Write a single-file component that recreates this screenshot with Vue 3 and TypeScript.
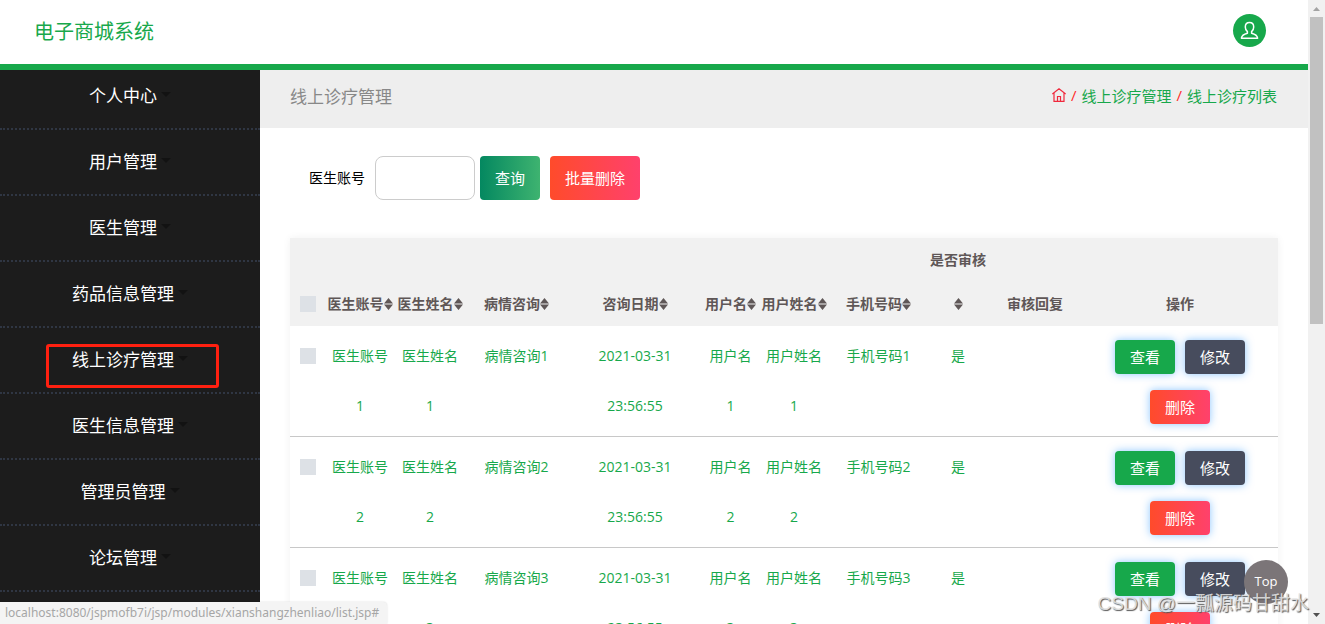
<script setup lang="ts">
import { ref } from 'vue'

interface Column {
  key: string
  label: string
  width: number
  sortable: boolean
  stacked?: boolean
}

interface Consultation {
  id: number
  account: string
  doctor: string
  question: string
  date: string
  user: string
  userName: string
  phone: string
  approved: string
  reply: string
}

const menu: string[] = [
  '个人中心',
  '用户管理',
  '医生管理',
  '药品信息管理',
  '线上诊疗管理',
  '医生信息管理',
  '管理员管理',
  '论坛管理',
]
const current = '线上诊疗管理'

const columns: Column[] = [
  { key: 'account', label: '医生账号', width: 70, sortable: true },
  { key: 'doctor', label: '医生姓名', width: 70, sortable: true },
  { key: 'question', label: '病情咨询', width: 103, sortable: true },
  { key: 'date', label: '咨询日期', width: 134, sortable: true },
  { key: 'user', label: '用户名', width: 57, sortable: true },
  { key: 'userName', label: '用户姓名', width: 70, sortable: true },
  { key: 'phone', label: '手机号码', width: 99, sortable: true },
  { key: 'approved', label: '是否审核', width: 60, sortable: true, stacked: true },
  { key: 'reply', label: '审核回复', width: 94, sortable: false },
]

const rows: Consultation[] = [1, 2, 3].map((n) => ({
  id: n,
  account: `医生账号${n}`,
  doctor: `医生姓名${n}`,
  question: `病情咨询${n}`,
  date: '2021-03-31 23:56:55',
  user: `用户名${n}`,
  userName: `用户姓名${n}`,
  phone: `手机号码${n}`,
  approved: '是',
  reply: '',
}))

const account = ref('')
const selected = ref<number[]>([])

function toggleAll(event: Event): void {
  selected.value = (event.target as HTMLInputElement).checked ? rows.map((r) => r.id) : []
}

function cell(row: Consultation, key: string): string {
  return String(row[key as keyof Consultation])
}
</script>

<template>
  <div class="window">
    <div class="page">
      <header class="topbar">
        <h1 class="brand">电子商城系统</h1>
        <button class="avatar" type="button" aria-label="用户">
          <svg viewBox="0 0 33 33" width="33" height="33" fill="none" stroke="#fff" stroke-width="1.5" stroke-linejoin="round">
            <path d="M16.5 8.500c-2.700 0-4.200 1.900-4.200 4.500 0 2.200.9 3.700 2.100 4.700v1.600c-3.300.8-5.600 2.200-6 4.900h16.200c-.4-2.700-2.700-4.100-6-4.900v-1.600c1.200-1 2.100-2.500 2.100-4.700 0-2.600-1.500-4.500-4.200-4.500z" />
          </svg>
        </button>
      </header>

      <div class="body">
        <nav class="sidebar">
          <ul class="menu">
            <li v-for="item in menu" :key="item" class="menu-item">
              <a href="#" class="menu-link">{{ item }}<span class="caret"></span></a>
              <span v-if="item === current" class="marker"></span>
            </li>
          </ul>
        </nav>

        <main class="main">
          <div class="heading">
            <h2 class="title">线上诊疗管理</h2>
            <nav class="crumbs">
              <a href="#" class="home" aria-label="首页">
                <svg viewBox="0 0 14 14" width="14" height="14" fill="none" stroke="#f0283c" stroke-width="1.2">
                  <path d="M.3 6L7 .8 13.700 6M2 5v8.400h10V5M5.500 13.400V8.500h3v4.900" />
                </svg>
              </a>
              <span class="slash">/</span>
              <a href="#">线上诊疗管理</a>
              <span class="slash">/</span>
              <a href="#">线上诊疗列表</a>
            </nav>
          </div>

          <div class="content">
            <form class="search" @submit.prevent>
              <label class="caption" for="account">医生账号</label>
              <input id="account" v-model="account" class="field" type="text" />
              <button class="btn query" type="submit">查询</button>
              <button class="btn danger" type="button">批量删除</button>
            </form>

            <table class="grid">
              <colgroup>
                <col class="col-check" />
                <col v-for="c in columns" :key="c.key" :style="{ width: c.width + 'px' }" />
                <col class="col-actions" />
              </colgroup>
              <thead>
                <tr>
                  <th class="check">
                    <input type="checkbox" aria-label="全选" :checked="selected.length === rows.length" @change="toggleAll" />
                  </th>
                  <th v-for="c in columns" :key="c.key">
                    {{ c.label }}<br v-if="c.stacked" /><svg
                      v-if="c.sortable"
                      class="sort"
                      viewBox="0 0 9 12"
                      width="9"
                      height="12"
                      fill="#5f5757"
                    >
                      <path d="M4.500 0L9 5.400H0zM4.500 12L9 6.600H0z" />
                    </svg>
                  </th>
                  <th>操作</th>
                </tr>
              </thead>
              <tbody>
                <tr v-for="row in rows" :key="row.id">
                  <td class="check">
                    <input v-model="selected" type="checkbox" :value="row.id" :aria-label="row.account" />
                  </td>
                  <td v-for="c in columns" :key="c.key">{{ cell(row, c.key) }}</td>
                  <td class="actions-cell">
                    <div class="actions">
                      <button class="btn small view" type="button">查看</button>
                      <button class="btn small edit" type="button">修改</button>
                      <button class="btn small danger" type="button">删除</button>
                    </div>
                  </td>
                </tr>
              </tbody>
            </table>
          </div>
        </main>
      </div>
    </div>

    <div class="scrollbar">
      <svg viewBox="0 0 17 17" width="17" height="17"><path d="M5 11h7L8.500 7z" fill="#a3a3a3" /></svg>
      <div class="track"><div class="thumb"></div></div>
      <svg viewBox="0 0 17 17" width="17" height="17"><path d="M5 6h7l-3.500 4z" fill="#505050" /></svg>
    </div>

    <div class="status">localhost:8080/jspmofb7i/jsp/modules/xianshangzhenliao/list.jsp#</div>
    <button class="to-top" type="button">Top</button>
    <div class="watermark">CSDN @一瓢源码甘甜水</div>
  </div>
</template>

<style>
body {
  margin: 0;
  overflow: hidden;
}
</style>

<style scoped>
.window {
  position: relative;
  display: flex;
  height: 100vh;
  overflow: hidden;
  background: #fff;
  color: #000;
  font-family: 'Open Sans', 'Noto Sans CJK SC', sans-serif;
  font-size: 14px;
}
.window * {
  box-sizing: border-box;
}
a {
  color: inherit;
  text-decoration: none;
}
button,
input {
  margin: 0;
  border: 0;
  padding: 0;
  font-family: inherit;
}
.page {
  display: flex;
  flex: 1;
  flex-direction: column;
  min-width: 0;
}
.topbar {
  display: flex;
  flex: none;
  align-items: center;
  justify-content: space-between;
  height: 70px;
  padding: 0 42px 4px 34px;
  border-bottom: 6px solid #17a84b;
}
.brand {
  margin: 0;
  color: #17a84b;
  font-size: 20px;
  font-weight: 400;
}
.avatar {
  width: 33px;
  height: 33px;
  border-radius: 50%;
  background: #17a84b;
}
.avatar svg {
  display: block;
}
.body {
  display: flex;
  flex: 1;
  min-height: 0;
}
.sidebar {
  flex: none;
  width: 260px;
  overflow: hidden;
  background: #1c1c1c;
}
.menu {
  margin: 0;
  padding: 0;
  list-style: none;
}
.menu-item {
  position: relative;
  padding: 16px 0;
  border-bottom: 2px dotted #2f3643;
}
.menu-item:first-child {
  padding-top: 10px;
}
.menu-link {
  display: flex;
  align-items: center;
  justify-content: center;
  gap: 4px;
  color: #fff;
  font-size: 17px;
  line-height: 32px;
}
.caret {
  margin-bottom: 4px;
  border: 5px solid transparent;
  border-top-color: #121212;
  border-bottom: 0;
}
.marker {
  position: absolute;
  top: 16px;
  left: 46px;
  width: 173px;
  height: 44px;
  border: 3px solid #ff2010;
  border-radius: 3px;
  pointer-events: none;
}
.main {
  flex: 1;
  min-width: 0;
  overflow: hidden;
}
.heading {
  display: flex;
  align-items: center;
  justify-content: space-between;
  height: 58px;
  padding: 0 31px 8px 30px;
  background: #eee;
}
.title {
  margin: 0;
  color: #888;
  font-size: 17px;
  font-weight: 400;
}
.crumbs {
  display: flex;
  align-items: center;
  gap: 5px;
  color: #17a84b;
  font-size: 15px;
}
.home svg {
  display: block;
}
.slash {
  color: #ff2a2a;
}
.content {
  padding: 28px 30px;
}
.search {
  display: flex;
  align-items: center;
  padding-left: 19px;
}
.caption {
  padding-bottom: 2px;
}
.field {
  width: 100px;
  height: 44px;
  margin: 0 5px 0 10px;
  padding: 0 10px;
  border: 1px solid #ccc;
  border-radius: 8px;
  background: #fff;
}
.btn {
  height: 44px;
  padding: 0 15px 2px;
  border-radius: 4px;
  color: #fff;
  font-size: 15px;
}
.query {
  margin-right: 10px;
  background: linear-gradient(to right, #048860, #3eb370);
}
.danger {
  background: linear-gradient(to right, #ff4b2b, #ff416c);
}
.view {
  background: #17a84b;
}
.edit {
  background: #474c5d;
}
.small {
  height: 34px;
  box-shadow: 0 0 8px rgba(30, 144, 255, 0.5);
}
.grid {
  width: 100%;
  margin-top: 38px;
  border-collapse: separate;
  border-spacing: 0;
  table-layout: fixed;
  box-shadow: 0 0 8px rgba(0, 0, 0, 0.06);
}
.col-check {
  width: 35px;
}
.col-actions {
  width: 196px;
}
.grid th {
  padding: 0;
  background: #f1f1f1;
  color: #5f5757;
  font-weight: 700;
  line-height: 44px;
  text-align: center;
  vertical-align: bottom;
  white-space: nowrap;
}
.sort {
  vertical-align: -1px;
}
.grid td {
  padding: 5px;
  border-bottom: 1px solid #c8c8c8;
  color: #17a84b;
  line-height: 50px;
  text-align: center;
  vertical-align: top;
}
.grid .check {
  padding-left: 10px;
  padding-right: 0;
  text-align: left;
}
.check input {
  width: 16px;
  height: 16px;
  margin-bottom: 2px;
  appearance: none;
  background: #dde1e6;
  vertical-align: middle;
}
.check input:checked {
  background: #17a84b;
}
.grid .actions-cell {
  padding: 14px 5px 12px;
  line-height: 20px;
}
.actions {
  display: flex;
  flex-wrap: wrap;
  justify-content: center;
  gap: 16px 10px;
}
.scrollbar {
  display: flex;
  flex: none;
  flex-direction: column;
  width: 17px;
  background: #f1f1f1;
}
.scrollbar svg {
  flex: none;
}
.track {
  flex: 1;
  padding: 0 2px;
}
.thumb {
  height: 52%;
  background: #c1c1c1;
}
.status {
  position: absolute;
  bottom: 0;
  left: 0;
  height: 22px;
  padding: 0 8px 0 5px;
  border-radius: 0 4px 0 0;
  background: #f4f4f4;
  box-shadow: 0 0 2px rgba(0, 0, 0, 0.15);
  color: #a6a6a6;
  font-family: 'Noto Sans', sans-serif;
  font-size: 12px;
  line-height: 22px;
}
.to-top {
  position: absolute;
  right: 37px;
  bottom: 20px;
  width: 44px;
  height: 44px;
  padding-bottom: 2px;
  border-radius: 50%;
  background: #7b7578;
  color: #fff;
  font-size: 13px;
}
.watermark {
  position: absolute;
  right: 16px;
  bottom: 6px;
  color: rgba(225, 225, 225, 0.9);
  font-family: 'Liberation Sans', 'Noto Sans CJK SC', sans-serif;
  font-size: 19px;
  font-weight: 400;
  line-height: 28px;
  text-shadow: 1px 1px 1px #555;
  white-space: nowrap;
  pointer-events: none;
}
</style>
